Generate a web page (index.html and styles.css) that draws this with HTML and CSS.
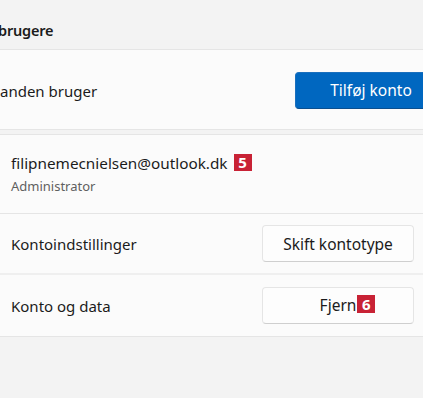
FILE: index.html
```html
<!DOCTYPE html>
<html lang="da">
<head>
<meta charset="utf-8">
<link rel="stylesheet" href="styles.css">
</head>
<body>
<div class="page">
  <h2 class="section-title">brugere</h2>
  <div class="card card-add">
    <span class="label">anden bruger</span>
    <button class="btn btn-primary">Tilføj konto</button>
  </div>
  <div class="card card-user">
    <div class="row row-account">
      <div class="account">
        <div class="email">filipnemecnielsen@outlook.dk <span class="badge">5</span></div>
        <div class="role">Administrator</div>
      </div>
    </div>
    <div class="row row-setting">
      <span class="label">Kontoindstillinger</span>
      <button class="btn btn-secondary">Skift kontotype</button>
    </div>
    <div class="row row-setting row-last">
      <span class="label">Konto og data</span>
      <button class="btn btn-secondary"><span class="btn-text">Fjern<span class="badge badge-over">6</span></span></button>
    </div>
  </div>
</div>
</body>
</html>
```
FILE: styles.css
```css
html, body {
  margin: 0;
  padding: 0;
}
body {
  background: #f3f3f3;
  font-family: "Noto Sans", "Open Sans", sans-serif;
  color: #1b1b1b;
  width: 423px;
  height: 398px;
  overflow: hidden;
}
.page {
  padding-top: 20px;
}
.section-title {
  margin: 0 0 0 -2px;
  font-size: 14.5px;
  font-weight: 600;
  line-height: 20px;
  height: 29px;
  letter-spacing: -0.2px;
}
.card {
  background: #fbfbfb;
  border-top: 1px solid #e5e5e5;
  border-bottom: 1px solid #e5e5e5;
}
.card-add {
  height: 79px;
  display: flex;
  align-items: center;
  justify-content: space-between;
}
.label {
  font-size: 15px;
  line-height: 20px;
}
.card-add .label {
  margin-top: 2px;
}
.btn {
  font-family: inherit;
  font-size: 15.5px;
  line-height: 20px;
  border-radius: 4px;
  cursor: pointer;
  padding: 0;
  flex-shrink: 0;
}
.btn-primary {
  width: 152px;
  height: 37px;
  margin-right: -24px;
  margin-top: 1px;
  background: #0067c0;
  color: #fff;
  border: 1px solid #1a6fbd;
  border-bottom-color: #0a4f8f;
}
.card-user {
  margin-top: 4px;
}
.row {
  padding-left: 11px;
  display: flex;
  align-items: center;
  justify-content: space-between;
}
.row-account {
  height: 78px;
  border-bottom: 1px solid #e5e5e5;
}
.account {
  margin-top: -2px;
}
.email {
  font-size: 15.3px;
  line-height: 22px;
  display: flex;
  align-items: center;
  margin-bottom: 4px;
}
.role {
  font-size: 13px;
  line-height: 17px;
  color: #5f5f5f;
}
.badge {
  display: inline-block;
  background: #c82235;
  color: #fff;
  font-weight: 700;
  font-size: 15px;
  line-height: 17px;
  width: 18px;
  height: 17px;
  text-align: center;
  margin-left: 6px;
}
.row-setting {
  height: 59px;
  border-bottom: 2px solid #efefef;
  padding-right: 9px;
}
.row-last {
  border-bottom: none;
  height: 61px;
}
.row-last .btn-secondary {
  margin-top: -1px;
}
.btn-secondary {
  width: 152px;
  height: 37px;
  background: #fdfdfd;
  color: #1b1b1b;
  border: 1px solid #e5e5e5;
  border-bottom-color: #cfcfcf;
  display: inline-flex;
  align-items: center;
  justify-content: center;
}
.btn-text {
  position: relative;
}
.badge-over {
  position: absolute;
  left: 100%;
  top: 0;
  margin-left: 1px;
  height: 18px;
  line-height: 18px;
}
```
